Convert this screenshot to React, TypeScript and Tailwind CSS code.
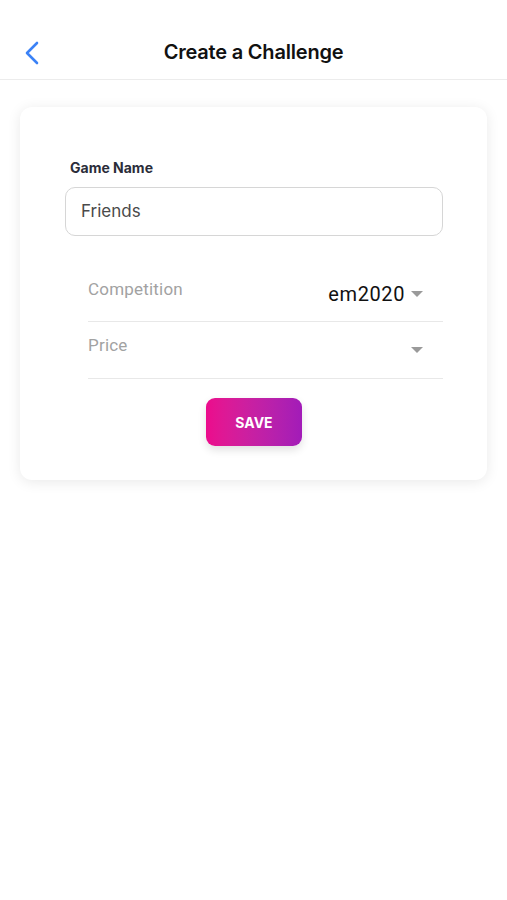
import React from "react";

export default function App() {
  return (
    <div className="w-[507px] h-[900px] bg-white" style={{ fontFamily: "Inter, 'Noto Sans', sans-serif" }}>
      <div className="relative h-[80px] flex items-center justify-center border-b border-[#ececec] pt-[24px]">
        <svg className="absolute left-[24px] top-[41px]" width="16" height="24" viewBox="0 0 16 24" fill="none">
          <path d="M13 2 L3 12 L13 22" stroke="#3b82f6" strokeWidth="2.6" strokeLinecap="round" strokeLinejoin="round" />
        </svg>
        <span className="text-[20px] font-semibold text-[#111] tracking-[-0.2px]">Create a Challenge</span>
      </div>
      <div className="px-[20px] pt-[27px]">
        <div className="rounded-[12px] bg-white shadow-[0_2px_14px_rgba(0,0,0,0.09)] pt-[50px] pb-[34px] pl-[45px] pr-[44px]">
          <div className="pl-[5px] text-[14px] font-bold text-[#2b2d3a]">Game Name</div>
          <div className="mt-[9px] h-[49px] rounded-[10px] border border-[#d6d6d6] flex items-center pl-[15px] text-[17px] text-[#4a4a4a]">
            Friends
          </div>
          <div className="pl-[23px] mt-[14px]" style={{ fontFamily: "Roboto, 'Noto Sans', sans-serif" }}>
            <div className="relative h-[72px] border-b border-[#e8e8e8] pr-[20px]">
              <span className="absolute left-0 top-[31px] text-[17px] text-[#a2a2a2] leading-none tracking-[0.2px]">Competition</span>
              <span className="absolute right-[20px] top-[34px] flex items-center text-[20px] text-[#111] leading-none tracking-[0.6px]">
                em2020
                <svg className="ml-[6px]" width="12" height="6" viewBox="0 0 12 6"><path d="M0 0 L12 0 L6 6 Z" fill="#9a9a9a" /></svg>
              </span>
            </div>
            <div className="h-[57px] border-b border-[#e8e8e8] flex items-start justify-between pt-[15px] pr-[20px]">
              <span className="text-[17px] text-[#a2a2a2] leading-none tracking-[0.2px]">Price</span>
              <svg className="mt-[10px]" width="12" height="6" viewBox="0 0 12 6"><path d="M0 0 L12 0 L6 6 Z" fill="#9a9a9a" /></svg>
            </div>
          </div>
          <div className="flex justify-center mt-[19px]">
            <button className="w-[96px] h-[48px] rounded-[9px] bg-gradient-to-r from-[#ec0a8c] to-[#a21bb8] text-white text-[14px] font-bold shadow-[0_4px_8px_rgba(0,0,0,0.12)]">
              SAVE
            </button>
          </div>
        </div>
      </div>
    </div>
  );
}
